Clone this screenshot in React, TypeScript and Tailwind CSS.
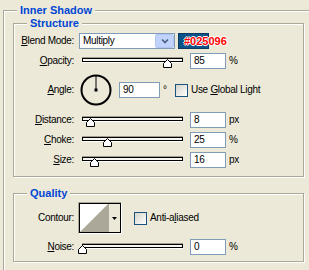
import React from "react";

function U({ c }: { c: string }) {
  return <span className="underline underline-offset-[1px] decoration-1">{c}</span>;
}

function Label({ children }: { children: React.ReactNode }) {
  return <div className="w-[60px] shrink-0 text-right whitespace-nowrap">{children}</div>;
}

function TextBox({ value, cls }: { value: string; cls: string }) {
  return (
    <div className={`h-[16px] shrink-0 border border-[#7f9db9] bg-white pl-[3px] flex items-center ${cls}`}>
      {value}
    </div>
  );
}

function Slider({ thumb }: { thumb: string }) {
  return (
    <div className="relative ml-[8px] h-[16px] w-[101px] shrink-0">
      <div className="mt-[4px] h-[6px] border-t border-t-[#a19e8f] border-b border-b-white">
        <div className="h-full border border-black bg-[#f7f6f1]" />
      </div>
      <svg className={`absolute top-[6px] ${thumb}`} width="9" height="9" viewBox="0 0 9 9">
        <polygon points="0.5,8.5 0.5,4.5 4.5,0.5 8.5,4.5 8.5,8.5" fill="#fff" stroke="#000" strokeWidth="1" />
      </svg>
    </div>
  );
}

function Checkbox({ cls }: { cls: string }) {
  return (
    <div className={`w-[13px] h-[13px] shrink-0 border border-[#1c5180] bg-linear-to-br from-[#d6d4ca] to-white ${cls}`} />
  );
}

const etched =
  "border border-[#aca899] shadow-[inset_1px_1px_0_#fff,1px_1px_0_#fff]";
const legendCls =
  "ml-[13px] px-[3px] bg-[#ece9d8] text-[11px] leading-[13px] font-bold text-[#0046d5] tracking-normal";

export default function App() {
  return (
    <div className="w-[309px] h-[270px] overflow-hidden bg-[#ece9d8] font-['Liberation_Sans',Arial,sans-serif] text-[10px] leading-none tracking-[-0.3px] text-black">
      <fieldset className={`ml-[3px] mt-[4px] w-[330px] h-[300px] ${etched}`}>
        <legend className={legendCls}>Inner Shadow</legend>

        <fieldset className={`ml-[9px] w-[291px] pt-[3px] pb-[8px] ${etched}`}>
          <legend className={legendCls}>Structure</legend>

          <div className="flex items-center h-[16px]">
            <Label>
              <U c="B" />lend Mode:
            </Label>
            <div className="ml-[5px] w-[96px] h-[16px] shrink-0 border border-[#7f9db9] bg-white flex">
              <div className="flex-1 pl-[3px] flex items-center">Multiply</div>
              <div className="w-[19px] h-full bg-[#c1d3fb] border border-[#b1c6f3] rounded-[2px] flex items-center justify-center">
                <svg width="8" height="6" viewBox="0 0 8 6">
                  <path d="M1 1.5 L4 4.5 L7 1.5" fill="none" stroke="#4d6185" strokeWidth="1.7" />
                </svg>
              </div>
            </div>
            <div className="relative ml-[3px] w-[31px] h-[16px] shrink-0 bg-[#0b5389] border border-[#0a3a60]">
              <span className="absolute left-[5px] top-[2px] whitespace-nowrap font-bold text-[11px] leading-none tracking-normal text-[#ff0000] [text-shadow:1px_0_0_#fff,-1px_0_0_#fff,0_1px_0_#fff,0_-1px_0_#fff]">
                #025096
              </span>
            </div>
          </div>

          <div className="flex items-center h-[16px] mt-[4px]">
            <Label>
              <U c="O" />pacity:
            </Label>
            <Slider thumb="left-[81px]" />
            <TextBox value="85" cls="ml-[7px] w-[36px]" />
            <span className="ml-[3px]">%</span>
          </div>

          <div className="flex items-center h-[32px] mt-[5px]">
            <Label>
              <U c="A" />ngle:
            </Label>
            <svg className="ml-[6px] shrink-0" width="32" height="32" viewBox="0 0 32 32">
              <circle cx="16" cy="16" r="14.5" fill="none" stroke="#000" strokeWidth="2" />
              <line x1="16" y1="2" x2="16" y2="16" stroke="#000" strokeWidth="1" />
              <rect x="14.5" y="14.5" width="3" height="3" fill="#000" />
            </svg>
            <TextBox value="90" cls="ml-[7px] w-[41px]" />
            <span className="ml-[3px] w-[5px]">°</span>
            <Checkbox cls="ml-[7px]" />
            <span className="ml-[3px] whitespace-nowrap">
              Use <U c="G" />lobal Light
            </span>
          </div>

          <div className="flex items-center h-[16px] mt-[6px]">
            <Label>
              <U c="D" />istance:
            </Label>
            <Slider thumb="left-[4px]" />
            <TextBox value="8" cls="ml-[7px] w-[36px]" />
            <span className="ml-[3px]">px</span>
          </div>

          <div className="flex items-center h-[16px] mt-[4px]">
            <Label>
              <U c="C" />hoke:
            </Label>
            <Slider thumb="left-[21px]" />
            <TextBox value="25" cls="ml-[7px] w-[36px]" />
            <span className="ml-[3px]">%</span>
          </div>

          <div className="flex items-center h-[16px] mt-[4px]">
            <Label>
              <U c="S" />ize:
            </Label>
            <Slider thumb="left-[8px]" />
            <TextBox value="16" cls="ml-[7px] w-[36px]" />
            <span className="ml-[3px]">px</span>
          </div>
        </fieldset>

        <fieldset className={`ml-[9px] mt-[10px] w-[291px] pt-[2px] pb-[6px] ${etched}`}>
          <legend className={legendCls}>Quality</legend>

          <div className="flex items-center h-[32px]">
            <Label>Contour:</Label>
            <div className="ml-[4px] w-[44px] h-[32px] shrink-0 border border-t-[#aca899] border-l-[#aca899] border-b-white border-r-white">
              <div className="h-full flex border border-black">
                <svg width="28" height="28" viewBox="0 0 28 28" className="shrink-0">
                  <rect width="28" height="28" fill="#fff" />
                  <polygon points="0,28 28,0 28,28" fill="#aca899" />
                </svg>
                <div className="flex-1 border-l border-l-[#aca899] bg-[#ece9d8] flex items-center justify-center">
                  <svg width="5" height="3" viewBox="0 0 5 3">
                    <polygon points="0,0 5,0 2.5,3" fill="#000" />
                  </svg>
                </div>
              </div>
            </div>
            <Checkbox cls="ml-[12px]" />
            <span className="ml-[3px] whitespace-nowrap">
              Anti-a<U c="l" />iased
            </span>
          </div>

          <div className="flex items-center h-[16px] mt-[5px]">
            <Label>
              <U c="N" />oise:
            </Label>
            <Slider thumb="left-[-4px]" />
            <TextBox value="0" cls="ml-[7px] w-[36px]" />
            <span className="ml-[3px]">%</span>
          </div>
        </fieldset>
      </fieldset>
    </div>
  );
}
